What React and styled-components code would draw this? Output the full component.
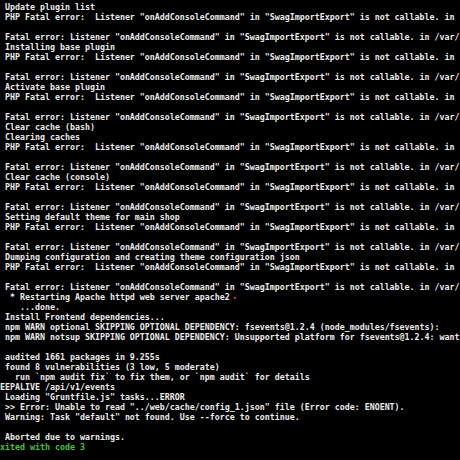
import React from "react";
import styled, { createGlobalStyle } from "styled-components";

const GlobalStyle = createGlobalStyle`
  html, body {
    margin: 0;
    padding: 0;
    background: #000;
  }
`;

const Terminal = styled.div`
  width: 460px;
  height: 460px;
  overflow: hidden;
  background: #000;
  padding-top: 2px;
  box-sizing: border-box;
  font-family: "DejaVu Sans Mono", "Liberation Mono", monospace;
  font-size: 8.3px;
  font-weight: bold;
  line-height: 10px;
  color: #ececec;
`;

const Line = styled.div`
  height: 10px;
  white-space: pre;
  color: ${(p) => (p.$tone === "green" ? "#45c245" : "#ececec")};
`;

const Mark = styled.span`
  display: inline-block;
  width: 2px;
  height: 2px;
  margin-left: 4px;
  vertical-align: middle;
  background: #d42a2a;
`;

// the terminal window is wider than the shot, so long lines stop at the edge
const php =
  ' PHP Fatal error:  Listener "onAddConsoleCommand" in "SwagImportExport" is not callable. in';
const fatal =
  ' Fatal error: Listener "onAddConsoleCommand" in "SwagImportExport" is not callable. in /var/';

const lines = [
  { text: " Update plugin list" },
  { text: php },
  { text: "" },
  { text: fatal },
  { text: " Installing base plugin" },
  { text: php },
  { text: "" },
  { text: fatal },
  { text: " Activate base plugin" },
  { text: php },
  { text: "" },
  { text: fatal },
  { text: " Clear cache (bash)" },
  { text: " Clearing caches" },
  { text: php },
  { text: "" },
  { text: fatal },
  { text: " Clear cache (console)" },
  { text: php },
  { text: "" },
  { text: fatal },
  { text: " Setting default theme for main shop" },
  { text: php },
  { text: "" },
  { text: fatal },
  { text: " Dumping configuration and creating theme configuration json" },
  { text: php },
  { text: "" },
  { text: fatal },
  { text: "  * Restarting Apache httpd web server apache2", mark: true },
  { text: "    ...done." },
  { text: " Install Frontend dependencies..." },
  { text: " npm WARN optional SKIPPING OPTIONAL DEPENDENCY: fsevents@1.2.4 (node_modules/fsevents):" },
  { text: " npm WARN notsup SKIPPING OPTIONAL DEPENDENCY: Unsupported platform for fsevents@1.2.4: want" },
  { text: "" },
  { text: " audited 1661 packages in 9.255s" },
  { text: " found 8 vulnerabilities (3 low, 5 moderate)" },
  { text: "   run `npm audit fix` to fix them, or `npm audit` for details" },
  { text: "EEPALIVE /api/v1/events" },
  { text: ' Loading "Gruntfile.js" tasks...ERROR' },
  { text: ' >> Error: Unable to read "../web/cache/config_1.json" file (Error code: ENOENT).' },
  { text: ' Warning: Task "default" not found. Use --force to continue.' },
  { text: "" },
  { text: " Aborted due to warnings." },
  { text: "xited with code 3", tone: "green" },
];

const App = () => (
  <>
    <GlobalStyle />
    <Terminal>
      {lines.map((line, i) => (
        <Line key={i} $tone={line.tone}>
          {line.text}
          {line.mark && <Mark />}
        </Line>
      ))}
    </Terminal>
  </>
);

export default App;
